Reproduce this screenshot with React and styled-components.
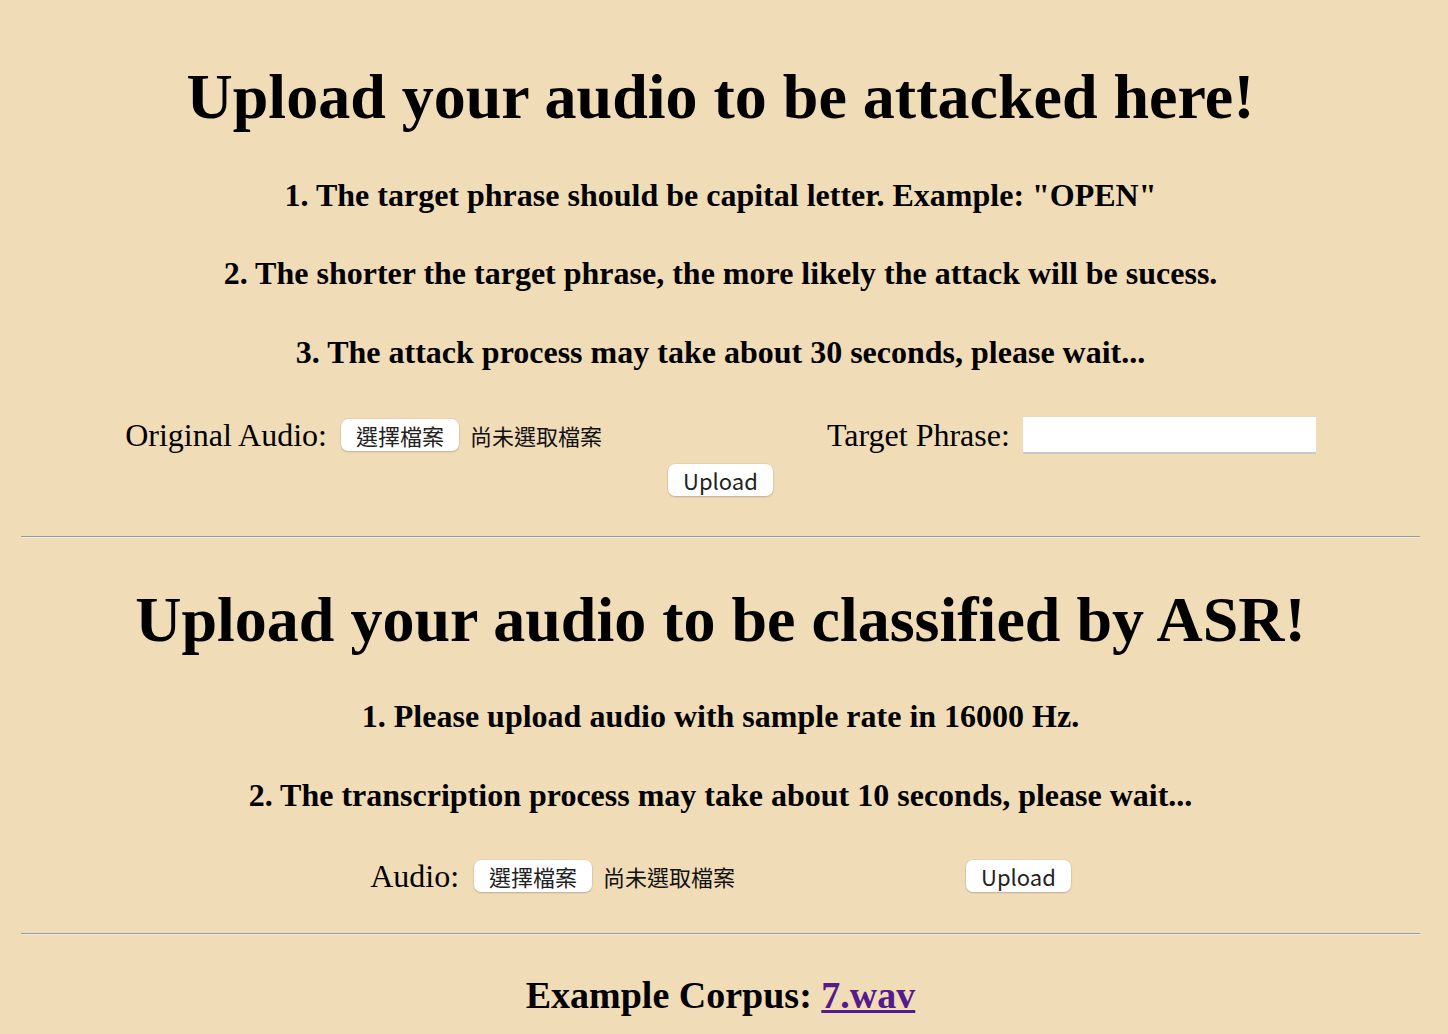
import React from 'react';
import styled, { createGlobalStyle } from 'styled-components';

const GlobalStyle = createGlobalStyle`
  html, body {
    margin: 0;
    padding: 0;
    background: #f1dcb8;
  }
  body {
    font-family: "Liberation Serif", "Times New Roman", serif;
    color: #000;
  }
`;

const Page = styled.div`
  padding: 58px 28px 40px 21px;
  display: flex;
  flex-direction: column;
  align-items: stretch;
`;

const Title = styled.h1`
  margin: ${({ $top }) => $top}px 0 0;
  font-size: 64px;
  line-height: 77px;
  font-weight: bold;
  text-align: center;
`;

const Note = styled.h3`
  margin: ${({ $top }) => $top}px 0 0;
  font-size: 32px;
  line-height: 36px;
  font-weight: bold;
  text-align: center;
`;

const FormRow = styled.div`
  margin-top: ${({ $top }) => $top}px;
  display: flex;
  align-items: center;
  justify-content: center;
`;

const Label = styled.span`
  font-size: 32px;
  line-height: 38px;
  margin-right: ${({ $gap }) => $gap ?? 14}px;
`;

const FileField = styled.div`
  width: ${({ $width }) => $width}px;
  display: flex;
  align-items: center;
  gap: 11px;
  margin-right: ${({ $gap }) => $gap}px;
`;

const NativeButton = styled.button`
  height: 32px;
  padding: 0 15px;
  background: #fff;
  border: none;
  border-radius: 7px;
  box-shadow: 0 1px 2px rgba(0, 0, 0, 0.18), 0 0 0 0.5px rgba(0, 0, 0, 0.08);
  font-family: "Noto Sans CJK TC", "Noto Sans", sans-serif;
  font-size: 22px;
  color: #222;
  line-height: 32px;
  cursor: pointer;
`;

const NoFile = styled.span`
  font-family: "Noto Sans CJK TC", "Noto Sans", sans-serif;
  font-size: 22px;
  color: #111;
`;

const TextInput = styled.input`
  width: 293px;
  height: 38px;
  box-sizing: border-box;
  border: none;
  border-top: 1px solid #e8d8bc;
  border-bottom: 2px solid #c9c9c9;
  background: #fff;
  outline: none;
`;

const Centered = styled.div`
  margin-top: ${({ $top }) => $top}px;
  display: flex;
  justify-content: center;
`;

const Rule = styled.hr`
  margin: ${({ $top }) => $top}px 0 0;
  height: 0;
  border: none;
  border-top: 1px solid #9a9a9a;
  border-bottom: 1px solid #ececec;
`;

const Corpus = styled.h2`
  margin: 40px 0 0;
  font-size: 38px;
  line-height: 40px;
  font-weight: bold;
  text-align: center;

  a {
    color: #551a8b;
  }
`;

export default function App() {
  return (
    <>
      <GlobalStyle />
      <Page>
        <Title $top={0}>Upload your audio to be attacked here!</Title>
        <Note $top={42}>1. The target phrase should be capital letter. Example: "OPEN"</Note>
        <Note $top={42}>2. The shorter the target phrase, the more likely the attack will be sucess.</Note>
        <Note $top={43}>3. The attack process may take about 30 seconds, please wait...</Note>

        <FormRow $top={46}>
          <Label>Original Audio:</Label>
          <FileField $width={478} $gap={8}>
            <NativeButton>選擇檔案</NativeButton>
            <NoFile>尚未選取檔案</NoFile>
          </FileField>
          <Label $gap={13}>Target Phrase:</Label>
          <TextInput type="text" />
        </FormRow>
        <Centered $top={10}>
          <NativeButton>Upload</NativeButton>
        </Centered>

        <Rule $top={40} />

        <Title $top={43}>Upload your audio to be classified by ASR!</Title>
        <Note $top={40}>1. Please upload audio with sample rate in 16000 Hz.</Note>
        <Note $top={43}>2. The transcription process may take about 10 seconds, please wait...</Note>

        <FormRow $top={44}>
          <Label $gap={15}>Audio:</Label>
          <FileField $width={483} $gap={9}>
            <NativeButton>選擇檔案</NativeButton>
            <NoFile>尚未選取檔案</NoFile>
          </FileField>
          <NativeButton>Upload</NativeButton>
        </FormRow>

        <Rule $top={38} />

        <Corpus>
          Example Corpus: <a href="#7.wav">7.wav</a>
        </Corpus>
      </Page>
    </>
  );
}
